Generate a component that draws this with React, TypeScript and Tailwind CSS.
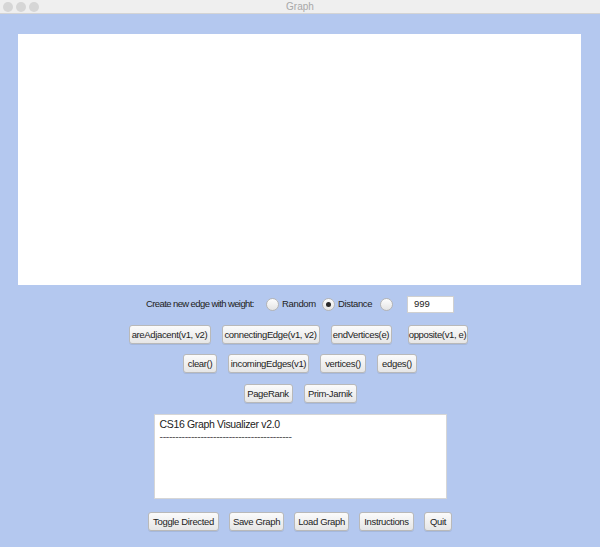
import React from "react";

const Btn: React.FC<{ label: string; w: string; cls?: string }> = ({ label, w, cls = "" }) => (
  <button
    className={`${w} ${cls} h-[19px] whitespace-nowrap rounded-[3px] border border-[#b9b9b9] bg-gradient-to-b from-[#fbfbfb] to-[#e6e6e6] p-0 text-[9.5px] leading-none tracking-[-0.35px] text-[#222] shadow-[0_1px_0_rgba(0,0,0,0.08)]`}
  >
    {label}
  </button>
);

const Radio: React.FC<{ on?: boolean }> = ({ on }) => (
  <span className="flex h-[13px] w-[13px] shrink-0 items-center justify-center rounded-full border border-[#b5b5b5] bg-gradient-to-b from-[#fdfdfd] to-[#e4e4e4]">
    {on && <span className="h-[5px] w-[5px] rounded-full bg-[#2a2a2a]" />}
  </span>
);

export default function App() {
  return (
    <div className="flex h-[547px] w-[600px] flex-col bg-[#b4c8ef] font-['Liberation_Sans',Arial,sans-serif]">
      {/* title bar */}
      <div className="relative flex h-[14px] items-center justify-center border-b border-[#d4d4d4] bg-[#efefef]">
        <div className="absolute left-[3px] top-[2px] flex gap-[3px]">
          <span className="h-[10px] w-[10px] rounded-full bg-[#d6d6d6]" />
          <span className="h-[10px] w-[10px] rounded-full bg-[#d6d6d6]" />
          <span className="h-[10px] w-[10px] rounded-full bg-[#d6d6d6]" />
        </div>
        <span className="text-[10px] text-[#a8a8a8]">Graph</span>
      </div>

      {/* canvas */}
      <div className="mx-[18px] mt-[20px] h-[251px] w-[563px] bg-white" />

      {/* weight row */}
      <div className="mt-[11px] flex h-[17px] items-center whitespace-nowrap pl-[146px] text-[9.5px] tracking-[-0.35px] text-[#222]">
        <span className="w-[120px] tracking-[-0.6px]">Create new edge with weight:</span>
        <Radio />
        <span className="ml-[3px] w-[40px]">Random</span>
        <Radio on />
        <span className="ml-[3px] w-[42px]">Distance</span>
        <Radio />
        <div className="ml-[14px] flex h-[17px] w-[47px] items-center border border-[#d0d0d0] bg-white pl-[6px] tracking-normal">999</div>
      </div>

      <div className="mt-[12px] flex justify-center gap-[11px] pr-[4px]">
        <Btn label="areAdjacent(v1, v2)" w="w-[82px]" />
        <Btn label="connectingEdge(v1, v2)" w="w-[98px]" />
        <Btn label="endVertices(e)" w="w-[61px]" />
        <Btn label="opposite(v1, e)" w="w-[60px]" cls="ml-[5px]" />
      </div>

      <div className="mt-[10px] flex justify-center gap-[11px]">
        <Btn label="clear()" w="w-[34px]" />
        <Btn label="incomingEdges(v1)" w="w-[81px]" />
        <Btn label="vertices()" w="w-[46px]" />
        <Btn label="edges()" w="w-[40px]" />
      </div>

      <div className="mt-[11px] flex justify-center gap-[11px]">
        <Btn label="PageRank" w="w-[49px]" />
        <Btn label="Prim-Jarnik" w="w-[53px]" />
      </div>

      <div className="mx-auto mt-[11px] h-[85px] w-[293px] border border-[#d6d6d6] bg-white px-[5px] pt-[3px] text-[10.5px] leading-[12px] tracking-[-0.35px] text-[#222]">
        <div>CS16 Graph Visualizer v2.0</div>
        <div className="text-[#555]">------------------------------------------</div>
      </div>

      <div className="mt-[13px] flex justify-center gap-[10px]">
        <Btn label="Toggle Directed" w="w-[71px]" />
        <Btn label="Save Graph" w="w-[55px]" />
        <Btn label="Load Graph" w="w-[55px]" />
        <Btn label="Instructions" w="w-[55px]" />
        <Btn label="Quit" w="w-[28px]" />
      </div>
    </div>
  );
}
